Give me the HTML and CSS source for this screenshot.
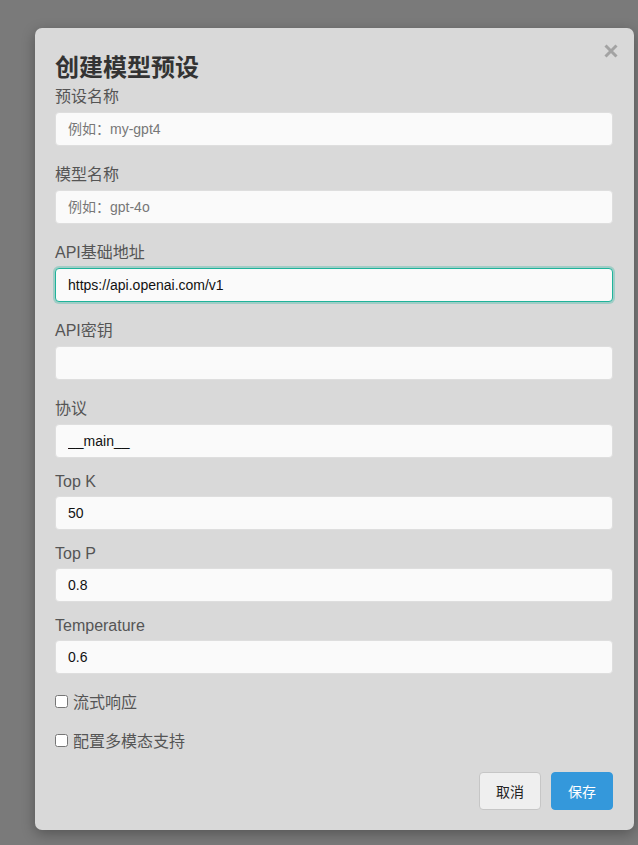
FILE: index.html
```html
<!DOCTYPE html>
<html lang="zh-CN">
<head>
  <meta charset="UTF-8" />
  <meta name="viewport" content="width=device-width, initial-scale=1.0" />
  <title>创建模型预设</title>
  <link rel="stylesheet" href="styles.css">
</head>
<body>
  <div class="overlay">
    <div class="modal">
      <button class="close" title="关闭">
        <svg width="14" height="14" viewBox="0 0 14 14">
          <path d="M1.5 1.5 L12.5 12.5 M12.5 1.5 L1.5 12.5" stroke="#a3a3a3" stroke-width="3" stroke-linecap="butt" />
        </svg>
      </button>
      <h2>创建模型预设</h2>

      <div class="field">
        <label>预设名称</label>
        <input type="text" placeholder="例如：my-gpt4">
      </div>
      <div class="field">
        <label>模型名称</label>
        <input type="text" placeholder="例如：gpt-4o">
      </div>
      <div class="field">
        <label>API基础地址</label>
        <input type="text" class="focused" value="https://api.openai.com/v1">
      </div>
      <div class="field">
        <label>API密钥</label>
        <input type="password">
      </div>
      <div class="field">
        <label>协议</label>
        <input type="text" value="__main__">
      </div>
      <div class="field">
        <label>Top K</label>
        <input type="number" value="50">
      </div>
      <div class="field">
        <label>Top P</label>
        <input type="number" value="0.8">
      </div>
      <div class="field">
        <label>Temperature</label>
        <input type="number" value="0.6">
      </div>

      <label class="check"><input type="checkbox"> 流式响应</label>
      <label class="check"><input type="checkbox"> 配置多模态支持</label>

      <div class="actions">
        <button class="btn cancel">取消</button>
        <button class="btn save">保存</button>
      </div>
    </div>
  </div>
</body>
</html>
```

FILE: styles.css
```css
body {
  margin: 0;
  font-family: "Liberation Sans", Arial, "Noto Sans CJK SC", sans-serif;
  background: #7a7a7a;
}

.overlay {
  min-height: 845px;
  padding: 28px 0 0 35px;
  box-sizing: border-box;
}

.modal {
  position: relative;
  width: 599px;
  box-sizing: border-box;
  padding: 20px 21px 20px 20px;
  background: #d9d9d9;
  border-radius: 7px;
  box-shadow: 0 4px 14px rgba(0, 0, 0, 0.3);
}

.modal h2 {
  margin: 0;
  font-size: 24px;
  font-weight: bold;
  color: #333;
}

.close {
  position: absolute;
  top: 16px;
  right: 16px;
  padding: 0;
  border: none;
  background: none;
  cursor: pointer;
  line-height: 0;
}

.field {
  margin-bottom: 15px;
}

.field label {
  display: block;
  margin-bottom: 5px;
  font-size: 16px;
  color: #555;
}

.field input {
  display: block;
  width: 100%;
  height: 34px;
  box-sizing: border-box;
  padding: 8px 12px;
  font-family: inherit;
  font-size: 14px;
  color: #111;
  background: #fafafa;
  border: 1px solid #dedede;
  border-radius: 4px;
  outline: none;
}

.field input::placeholder {
  color: #777;
}

.field input.focused {
  border-color: #1fb39a;
  box-shadow: 0 0 0 2px rgba(31, 179, 154, 0.3);
}

.field input::-webkit-outer-spin-button,
.field input::-webkit-inner-spin-button {
  -webkit-appearance: none;
  margin: 0;
}

.check {
  display: flex;
  align-items: center;
  margin-bottom: 15px;
  font-size: 16px;
  color: #555;
}

.check input {
  margin: 0 5px 0 0;
  width: 13px;
  height: 13px;
}

.actions {
  display: flex;
  justify-content: flex-end;
  gap: 10px;
  margin-top: 20px;
}

.btn {
  padding: 8px 16px;
  font-family: inherit;
  font-size: 14px;
  border-radius: 4px;
  cursor: pointer;
}

.cancel {
  background: #efefef;
  color: #222;
  border: 1px solid #c6c6c6;
}

.save {
  background: #3498db;
  color: #fff;
  border: 1px solid #3498db;
}
```
